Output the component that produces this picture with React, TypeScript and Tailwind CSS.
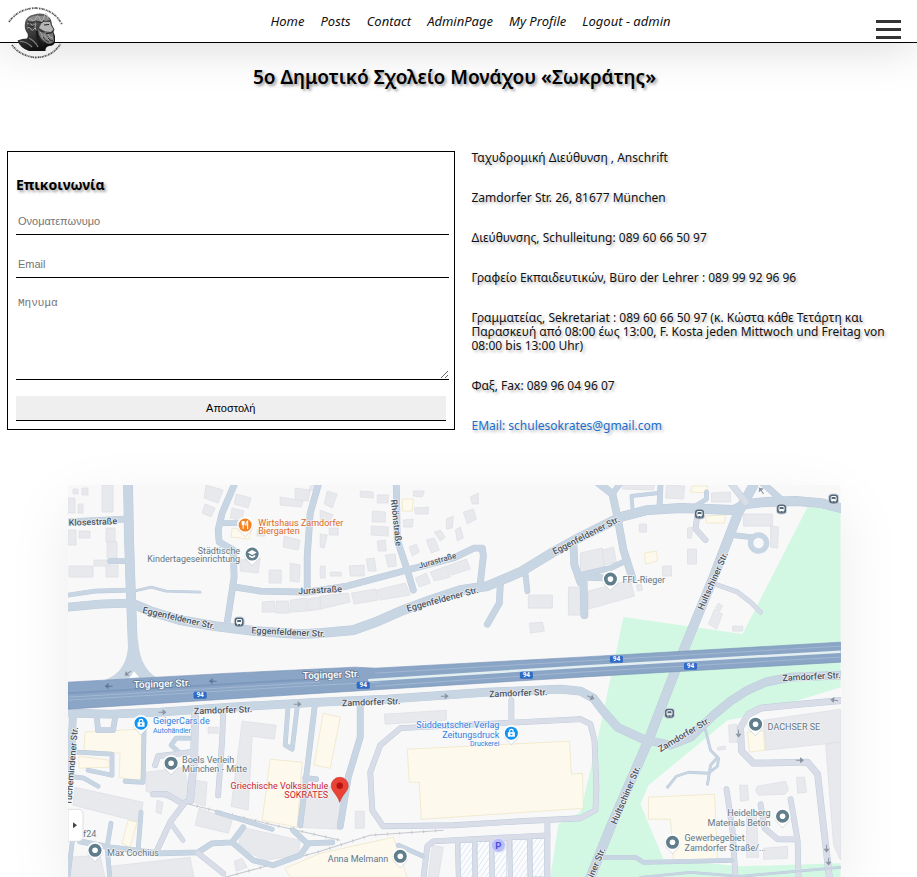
import React from 'react';

const NAV = ['Home', 'Posts', 'Contact', 'AdminPage', 'My Profile', 'Logout - admin'];

const CONTACT = [
  'Ταχυδρομική Διεύθυνση , Anschrift',
  'Zamdorfer Str. 26, 81677 München',
  'Διεύθυνσης, Schulleitung: 089 60 66 50 97',
  'Γραφείο Εκπαιδευτικών, Büro der Lehrer : 089 99 92 96 96',
  'Γραμματείας, Sekretariat : 089 60 66 50 97 (κ. Κώστα κάθε Τετάρτη και Παρασκευή από 08:00 έως 13:00, F. Kosta jeden Mittwoch und Freitag von 08:00 bis 13:00 Uhr)',
  'Φαξ, Fax: 089 96 04 96 07',
];

const BLUE = '#c8d5e3';
const GREY = '#d9dde7';

// [points, width, colour]
const ROADS: [string, number, string][] = [
  ['68,522 125,519', 6, BLUE],
  ['110,561 128,561', 5, BLUE],
  ['68,595 95,591 128,590', 4, BLUE],
  ['134,591 151,587 166,591 200,592', 2, BLUE],
  ['68,607 100,604 131,603', 8, BLUE],
  ['128,485 129,540 131,600 134,675', 9, BLUE],
  ['131,603 150,611 180,620 215,626 255,631 300,634 320,633 353,630 378,621 403,610 430,600 460,590 487,586 520,572 553,552 580,537 600,527 620,517 647,510 680,508 733,510 745,504 765,502 797,501 820,503 840,508', 9, BLUE],
  ['234,485 222,513 218,530 219,542 233,550 234,577 227,623', 6, BLUE],
  ['222,523 240,523', 5, BLUE],
  ['318,485 310,513 307,557 307,590', 6, BLUE],
  ['396,485 397,540 407,570 413,590', 6, BLUE],
  ['235,587 260,591 307,592 347,586 407,570 453,558 474,548 482,548 483,556 480,583', 6, BLUE],
  ['500,583 499,603 487,624', 6, BLUE],
  ['525,573 527,591', 5, BLUE],
  ['573,545 574,565 580,582', 7, BLUE],
  ['598,483 612,494 617,517 623,550 632,578', 7, BLUE],
  ['620,483 612,494', 5, BLUE],
  ['660,485 659,507', 5, BLUE],
  ['632,508 631,496 658,493', 3, BLUE],
  ['692,508 706,499 706,492', 4, BLUE],
  ['580,575 610,568 627,560', 5, BLUE],
  ['583,577 610,578', 6, BLUE],
  ['583,577 584,615', 7, BLUE],
  ['697,513 695,529 705,540', 5, GREY],
  ['753,485 738,512 713,577 675,670 648,740 610,827 588,882', 9, BLUE],
  ['730,483 745,502', 6, GREY],
  ['762,483 780,499', 6, BLUE],
  ['733,535 750,537', 5, BLUE],
  ['717,585 737,592 750,602 760,612', 4, GREY],
  ['68,713 110,714 160,712 230,707 320,702 387,699 487,692 560,689 580,691 593,698 602,710 617,727 643,739 670,745 690,737 713,715 730,701 747,690 765,682 790,677 840,675', 8, BLUE],
  ['73,714 70,775', 7, BLUE],
  ['97,719 98,730 113,730 115,718', 5, BLUE],
  ['144,730 143,782 125,781', 4, BLUE],
  ['77,752 112,754 112,775 88,770', 4, BLUE],
  ['68,776 84,778 98,786', 4, BLUE],
  ['195,714 194,760 190,800', 7, GREY],
  ['185,802 170,822 157,850', 5, GREY],
  ['153,794 167,794 183,804', 5, GREY],
  ['170,822 183,840', 4, GREY],
  ['190,738 176,738 171,745 178,751', 4, BLUE],
  ['190,752 175,754 158,756 155,765', 5, GREY],
  ['223,714 222,740 218,795', 5, GREY],
  ['288,705 285,745 292,749 297,707', 4, BLUE],
  ['315,702 308,760 300,825', 5, BLUE],
  ['305,778 316,779', 5, BLUE],
  ['360,705 360,737 348,777 340,826', 6, BLUE],
  ['80,841 110,847 160,853 198,852 212,843 232,842 243,827', 5, BLUE],
  ['217,812 272,829', 4, BLUE],
  ['293,830 307,843 332,842', 5, BLUE],
  ['307,845 300,855 273,865 253,860 233,843', 5, BLUE],
  ['198,853 223,873', 5, GREY],
  ['111,823 107,847 110,879', 4, BLUE],
  ['141,812 138,850', 4, BLUE],
  ['73,835 68,877', 4, BLUE],
  ['580,719 500,723 400,728 380,745 370,772 372,810 383,826 453,825 520,821 580,818 595,810 596,787 594,740 590,724 580,719', 5, GREY],
  ['511,700 511,722', 5, GREY],
  ['423,879 427,846 433,841 547,835', 5, GREY],
  ['547,822 547,879', 5, GREY],
  ['457,841 458,879', 4, GREY],
  ['474,841 475,879', 4, GREY],
  ['491,839 492,879', 4, GREY],
  ['509,838 510,879', 4, GREY],
  ['529,837 530,879', 4, GREY],
  ['398,845 423,856', 4, BLUE],
  ['844,700 800,704 760,708 748,714 740,727 741,751 753,763 807,762 817,774 821,810 829,879', 6, GREY],
  ['726,789 732,830 735,879', 5, GREY],
  ['760,804 764,828 777,839 795,839', 5, GREY],
  ['790,799 797,840 798,879', 5, GREY],
  ['602,857 635,857 643,862 732,860', 4, BLUE],
  ['640,877 690,872 740,876 840,867', 2, BLUE],
  ['705,730 710,750 718,758 717,766 708,773 688,772 676,776 667,787', 2, BLUE],
  ['707,784 710,765 717,757', 2, BLUE],
];

const BUILDINGS = [
  '102,485 113,485 113,512 102,512', '73,489 78,489 78,494 73,494', '82,488 88,488 88,495 82,495',
  '68,498 75,498 75,513 68,513', '78,504 83,504 83,513 78,513', '68,530 76,530 76,545 68,545',
  '79,531 90,531 90,538 79,538', '106,528 115,528 115,542 106,542', '107,542 117,542 117,558 107,558',
  '94,560 110,560 110,566 94,566', '69,566 93,566 93,577 69,577', '106,565 118,565 118,577 106,577',
  '206,485 223,490 218,503 204,498', '205,504 215,508 211,517 202,513', '236,494 251,498 248,508 234,504',
  '232,508 244,511 241,521 230,518', '240,560 260,558 258,573 240,571', '269,570 281,570 281,583 269,583',
  '290,563 300,565 299,582 290,581', '284,536 300,540 298,550 283,547', '295,488 310,490 308,501 295,500',
  '280,497 303,501 301,507 280,505', '257,530 265,530 265,536 257,536', '310,486 320,483 318,490 309,491',
  '327,491 337,494 332,508 324,504', '320,510 333,515 328,522 320,520', '329,528 338,528 338,535 329,535',
  '320,534 327,535 324,548 320,547', '360,491 373,492 373,498 360,497', '377,495 388,495 388,503 377,503',
  '372,511 385,512 385,522 372,522', '371,526 388,527 388,536 371,535', '377,541 385,540 386,551 378,551',
  '385,555 395,554 396,566 388,567', '320,566 325,566 325,578 320,578', '330,572 341,572 341,576 330,576',
  '349,566 364,565 364,576 350,576', '366,559 374,558 376,571 368,571', '262,602 274,601 275,612 262,612',
  '276,601 288,601 289,613 276,613', '290,600 306,598 306,611 290,612', '307,599 320,597 321,609 307,611',
  '320,596 348,593 350,602 320,609', '351,593 375,589 378,600 354,604', '376,590 405,583 410,595 380,600',
  '415,578 426,573 430,583 419,587', '430,572 446,566 450,577 434,581', '447,566 466,559 470,569 451,575',
  '413,491 424,491 422,497 413,496', '414,508 428,507 428,514 415,514', '403,520 413,519 412,527 403,527',
  '426,540 434,538 439,550 431,553', '409,547 416,544 419,552 412,556', '446,519 453,516 452,528 446,529',
  '434,532 440,530 445,537 440,541', '455,530 460,527 463,538 457,541', '463,512 473,509 476,519 467,524',
  '470,497 478,493 478,504 472,504', '622,485 654,485 653,490 622,489', '666,485 684,486 683,499 665,498',
  '711,493 730,492 730,502 711,502', '743,514 772,514 772,526 743,526', '770,526 778,527 777,548 770,547',
  '528,595 552,595 552,608 528,608', '529,623 542,622 544,631 530,633', '568,587 580,587 580,615 568,615',
  '580,553 602,548 604,566 580,573', '602,550 613,547 616,562 604,565', '588,591 630,580 634,596 588,609',
  '639,524 646,524 646,532 639,532', '662,566 671,566 671,576 662,576', '687,549 696,549 696,564 687,564',
  '687,528 692,527 691,538 687,538', '714,609 722,614 716,629 708,624', '718,603 722,606 719,611 715,608',
  '732,626 742,626 742,631 732,631', '636,585 641,584 642,590 637,591',
  '146,772 184,767 190,795 182,803 146,791', '192,779 207,782 205,806 187,800', '208,727 218,727 218,733 208,733',
  '242,721 276,725 274,739 252,736 248,810 231,806 240,737', '75,787 143,802 140,822 73,805',
  '157,800 163,802 161,814 156,812', '199,808 232,820 228,833 195,825', '242,827 300,840 298,855 265,860 238,847',
  '68,857 100,855 105,877 68,877', '110,866 190,857 194,877 110,877', '234,861 242,858 247,867 236,871',
  '307,790 341,785 338,829 300,827', '384,714 446,710 446,720 385,724', '355,811 364,811 364,828 355,828',
  '432,845 443,847 438,877 428,877', '763,720 840,709 840,742 765,750', '825,744 840,742 840,860 833,845',
  '728,725 736,724 737,742 729,742', '717,747 725,746 725,749 717,750', '739,785 747,785 748,800 740,801',
  '796,777 804,777 806,792 797,793', '746,817 756,815 758,857 746,857', '763,848 787,846 787,858 763,859',
  '757,786 785,781 788,790 784,794 758,795 755,790', '515,838 521,838 521,847 515,847',
];

const YELLOW = [
  '232,528 251,531 249,539 231,537', '402,499 413,499 412,511 402,511', '692,486 707,486 706,493 690,492',
  '705,516 725,515 724,523 706,523', '644,553 656,551 657,561 645,564',
  '85,732 142,729 141,781 119,777 120,753 84,750', '79,756 109,760 109,767 79,768', '128,820 137,822 130,847 122,843',
  '270,759 302,762 297,827 262,820', '323,713 340,717 330,768 314,765 320,730',
  '407,749 569,741 571,774 582,773 583,808 421,819 419,782 409,782',
  '285,868 320,853 393,837 407,877 290,877', '747,732 763,730 764,750 749,752',
  '648,797 714,794 717,860 673,860 670,819 648,819',
];

const PARKING = [[460, 12], [477, 12], [494, 12], [512, 15], [532, 12]];

type LabelProps = { x: number; y: number; r?: number; fill?: string; size?: number; anchor?: 'start' | 'middle' | 'end'; children: React.ReactNode };

function Label({ x, y, r = 0, fill = '#4b5460', size = 9, anchor = 'middle', children }: LabelProps) {
  return (
    <text x={x} y={y} transform={`rotate(${r} ${x} ${y})`} fill={fill} fontSize={size} textAnchor={anchor} stroke="#f7f8fa" strokeWidth={1.5} strokeOpacity={0.8} paintOrder="stroke" strokeLinejoin="round" fontWeight={fill === '#4b5460' ? 500 : 400}>
      {children}
    </text>
  );
}

function Pin({ x, y, fill = '#607d8b', kind = 'dot' }: { x: number; y: number; fill?: string; kind?: string }) {
  return (
    <g transform={`translate(${x} ${y})`}>
      <path d="M0 11 L-5 6 A8 8 0 1 1 5 6 Z" fill="#c3c9d0" transform="translate(0 1)" opacity=".6" />
      <path d="M0 11 L-5 6 A8 8 0 1 1 5 6 Z" fill="#fff" />
      <circle r="6.5" fill={fill} />
      {kind === 'dot' && <circle r="2.8" fill="#fff" />}
      {kind === 'food' && <path d="M-3 -4v3q0 1 1 1v4M-1 -4v3q0 1-1 1M-2 -4v4M2.5 4v-8q-2 1-2 4h2" fill="none" stroke="#fff" strokeWidth="1" />}
      {kind === 'school' && <path d="M-4.5 -1.5 0 -4 4.5 -1.5 0 1ZM-3 .8 0 2.4 3 .8V2.6L0 4.2-3 2.6Z" fill="#fff" />}
      {kind === 'shop' && (
        <>
          <path d="M-3.5 -1h7v4.500h-7Z" fill="#fff" />
          <path d="M-1.800 -1v-1a1.800 1.800 0 0 1 3.600 0v1" fill="none" stroke="#fff" strokeWidth="1.200" />
          <path d="M-1 .5h2v1.500h-2Z" fill={fill} />
        </>
      )}
    </g>
  );
}

function Bus({ x, y }: { x: number; y: number }) {
  return (
    <g transform={`translate(${x} ${y})`}>
      <rect x="-5" y="-5" width="10" height="10" rx="3.5" fill="#52677a" stroke="#cfd6dd" strokeWidth="1" />
      <rect x="-2.500" y="-2.500" width="5" height="4" rx="1" fill="none" stroke="#fff" strokeWidth="1" />
      <path d="M-2 .5h4M-2 2.700h1M1 2.700h1" stroke="#fff" strokeWidth="1" />
    </g>
  );
}

function Shield({ x, y }: { x: number; y: number }) {
  return (
    <g>
      <rect x={x - 6.5} y={y - 3.5} width="13" height="7" rx="1.5" fill="#2f6ac6" />
      <text x={x} y={y + 2.3} fontSize="6.5" fontWeight="700" fill="#fff" textAnchor="middle">94</text>
    </g>
  );
}

function Arrow({ x, y, r = 0, fill = '#8a94a2' }: { x: number; y: number; r?: number; fill?: string }) {
  return <path d="M-3.500 0h5M1 -2 3.500 0 1 2Z" fill={fill} stroke={fill} strokeWidth="1" transform={`translate(${x} ${y}) rotate(${r})`} />;
}

function StreetMap() {
  return (
    <svg viewBox="68 485 772 392" className="block w-full font-['Roboto','Noto_Sans',sans-serif]" role="img" aria-label="Zamdorfer Str. 26, München">
      <defs>
        <pattern id="hatch" width="4" height="4" patternUnits="userSpaceOnUse" patternTransform="rotate(35)">
          <rect width="4" height="4" fill="#fbfcfe" />
          <path d="M0 0v4" stroke="#dde5f3" strokeWidth="1.500" />
        </pattern>
      </defs>
      <rect x="68" y="485" width="772" height="392" fill="#f8f8f9" />
      <path d="M807 507 840 510V687L743 717 727 720 648 785 640 804 663 859 740 866 840 863V877H550L558 824 580 812 597 740 623 617 742 634Z" fill="#d2f8e3" />
      <g fill="#e8e9ed" stroke="#dcdee4" strokeWidth=".7">{BUILDINGS.map((p) => <polygon key={p} points={p} />)}</g>
      <g fill="#fdfaed" stroke="#efe6c6" strokeWidth=".8">{YELLOW.map((p) => <polygon key={p} points={p} />)}</g>
      <g stroke="#c9d2e0" strokeWidth=".6" fill="url(#hatch)">
        {PARKING.map(([x, w]) => <rect key={x} x={x} y={842 - (x - 460) / 18} width={w} height="38" />)}
      </g>
      <path d="M185 803 270 824 340 840M225 877 320 851 370 835 443 830" fill="none" stroke="#c5c8cd" strokeWidth="1" />
      <path d="M185 803 270 824 340 840M225 877 320 851 370 835 443 830" fill="none" stroke="#c5c8cd" strokeWidth="3" strokeDasharray="1 11" />
      <g fill="none" strokeLinecap="round" strokeLinejoin="round">
        {ROADS.map(([p, w], i) => <polyline key={i} points={p} stroke="#bccadb" strokeWidth={w + 0.8} />)}
        {ROADS.map(([p, w, c], i) => <polyline key={i} points={p} stroke={c} strokeWidth={w} />)}
      </g>
      <circle cx="758" cy="543" r="8" fill="#f7f8f9" stroke={BLUE} strokeWidth="5.5" />
      <path d="M128 640Q129 672 104 680H162Q140 672 138 640Z" fill={BLUE} />
      <path d="M134 671 129 678 139 677Z" fill="#fff" />
      <path d="M68 682 230 673 355 667 375 668 580 657 840 642V662L580 677 320 693 68 709Z" fill="#8ba5c6" stroke="#7591b6" strokeWidth=".6" />
      <path d="M368 680 580 666.500 840 651.500" stroke="#e3eff0" strokeWidth="2.500" fill="none" />
      <path d="M68 700 320 685 380 682M68 697 320 682M375 673 580 661 840 646M375 686 580 672 840 657" stroke="#a7bcd6" strokeWidth=".8" fill="none" />
      <path d="M68 693 330 678" stroke="#7d98bd" strokeWidth="2" fill="none" />
      {[[363, 685], [616, 659], [526, 675], [690, 666], [200, 695]].map(([x, y]) => <Shield key={x} x={x} y={y} />)}
      <g fontSize="10" fontWeight="500" fill="#fff" textAnchor="middle" stroke="#5f7897" strokeWidth="1.500" paintOrder="stroke">
        <text x="162" y="687" transform="rotate(-2 162 687)">Töginger Str.</text>
        <text x="331" y="678" transform="rotate(-2 331 678)">Töginger Str.</text>
      </g>
      <Arrow x={213} y={681} r={180} fill="#5d7799" /><Arrow x={109} y={686} r={180} fill="#5d7799" />
      <Arrow x={128} y={673} r={145} /><Arrow x={162} y={712} /><Arrow x={297} y={704} /><Arrow x={444} y={696} />
      <Arrow x={590} y={697} r={25} /><Arrow x={738} y={733} r={90} /><Arrow x={799} y={760} /><Arrow x={834} y={700} r={190} />
      <Arrow x={826} y={848} r={90} /><Arrow x={828} y={861} r={90} /><Arrow x={761} y={491} r={235} />

      <Label x={93} y={525} r={-2}>Klosestraße</Label>
      <Label x={178} y={621} r={13}>Eggenfeldener Str.</Label>
      <Label x={288} y={635} r={3}>Eggenfeldener Str.</Label>
      <Label x={320} y={593} r={-3}>Jurastraße</Label>
      <Label x={438} y={563} r={-16} size={8}>Jurastraße</Label>
      <Label x={393} y={523} r={84}>Rhönstraße</Label>
      <Label x={443} y={602} r={-15}>Eggenfeldener Str.</Label>
      <Label x={587} y={538} r={-27}>Eggenfeldener Str.</Label>
      <Label x={715} y={582} r={-66}>Hultschiner Str.</Label>
      <Label x={628} y={796} r={-67}>Hultschiner Str.</Label>
      <Label x={605} y={849} r={-67} anchor="end">Hultschiner Str.</Label>
      <Label x={223} y={713} r={-2}>Zamdorfer Str.</Label>
      <Label x={371} y={705} r={-2}>Zamdorfer Str.</Label>
      <Label x={518} y={696} r={-2}>Zamdorfer Str.</Label>
      <Label x={685} y={737} r={-31}>Zamdorfer Str.</Label>
      <Label x={782} y={681} r={-3} anchor="start">Zamdorfer Str.</Label>
      <Label x={78} y={727} r={-85} anchor="end">Tuchemindener Str.</Label>

      <Bus x={239} y={622} /><Bus x={699} y={514} /><Bus x={781} y={509} /><Bus x={833} y={499} /><Bus x={669} y={713} />

      <Pin x={245} y={525} fill="#f58220" kind="food" />
      <Label x={258} y={526} anchor="start" fill="#e0691f">Wirtshaus Zamdorfer</Label>
      <Label x={258} y={534} anchor="start" fill="#e0691f">Biergarten</Label>
      <Pin x={252} y={554} kind="school" />
      <Label x={240} y={554} anchor="end" fill="#66777f">Städtische</Label>
      <Label x={240} y={562} anchor="end" fill="#66777f">Kindertageseinrichtung</Label>
      <Pin x={610} y={579} />
      <Label x={622} y={583} anchor="start" fill="#66777f">FFL-Rieger</Label>
      <Pin x={141} y={723} fill="#1194f0" kind="shop" />
      <Label x={153} y={724} anchor="start" fill="#3481e0">GeigerCars.de</Label>
      <Label x={153} y={733} anchor="start" fill="#3481e0" size={7}>Autohändler</Label>
      <Pin x={171} y={763} />
      <Label x={182} y={763} anchor="start" fill="#66777f">Boels Verleih</Label>
      <Label x={182} y={772} anchor="start" fill="#66777f">München - Mitte</Label>
      <Pin x={511} y={733} fill="#1194f0" kind="shop" />
      <Label x={499} y={728} anchor="end" fill="#3481e0">Süddeutscher Verlag</Label>
      <Label x={499} y={738} anchor="end" fill="#3481e0">Zeitungsdruck</Label>
      <Label x={499} y={746} anchor="end" fill="#3481e0" size={7}>Druckerei</Label>
      <Pin x={755} y={724} />
      <Label x={767} y={730} anchor="start" fill="#66777f">DACHSER SE</Label>
      <Pin x={782} y={816} />
      <Label x={770} y={816} anchor="end" fill="#66777f">Heidelberg</Label>
      <Label x={770} y={826} anchor="end" fill="#66777f">Materials Beton</Label>
      <Pin x={672} y={842} />
      <Label x={684} y={841} anchor="start" fill="#66777f">Gewerbegebiet</Label>
      <Label x={684} y={851} anchor="start" fill="#66777f">Zamdorfer Straße/...</Label>
      <Pin x={95} y={850} />
      <Label x={107} y={856} anchor="start" fill="#66777f">Max Cochius</Label>
      <Label x={83} y={837} anchor="start" fill="#66777f">f24</Label>
      <Pin x={400} y={856} />
      <Label x={388} y={862} anchor="end" fill="#66777f">Anna Melmann</Label>
      <Label x={328} y={789} anchor="end" fill="#d01f2b">Griechische Volksschule</Label>
      <Label x={328} y={798} anchor="end" fill="#d01f2b">SOKRATES</Label>
      <path d="M339.500 802C337 794 331 791 331 785.500A8.500 8.500 0 0 1 348 785.500C348 791 342 794 339.500 802Z" fill="#ea4335" stroke="#c5352b" strokeWidth=".6" />
      <circle cx="339.500" cy="785.500" r="3.200" fill="#b31412" />
      <circle cx="498" cy="845" r="7" fill="#b9bdf8" stroke="#dfe1fc" strokeWidth="1" />
      <text x="498" y="848.500" fontSize="9.500" fontWeight="700" fill="#4a4fdc" textAnchor="middle">P</text>
      <path d="M68 809H78Q83 809 83 814V836Q83 841 78 841H68Z" fill="#fff" stroke="#d5d8dc" strokeWidth=".8" />
      <path d="M73 822 77 825 73 828Z" fill="#444" />
    </svg>
  );
}

function Logo() {
  return (
    <svg viewBox="0 0 56 56" className="size-14" role="img" aria-label="Σωκράτης">
      <defs>
        <path id="upper" d="M1 16Q10 3 27 2Q46 3 54 18.500" />
        <path id="lower" d="M4 39Q12 50 28 51.500Q44 51 52.500 38" />
        <linearGradient id="bust" x1="0" x2=".3" y1="0" y2="1"><stop offset="0" stopColor="#6a6a6a" /><stop offset=".6" stopColor="#3a3a3a" /><stop offset="1" stopColor="#111" /></linearGradient>
      </defs>
      <g fill="none" stroke="#555" strokeWidth="1.800">
        <use href="#upper" strokeDasharray="1.300 .5 .8 .6 1.600 .4 .7 1" />
        <use href="#lower" strokeDasharray="1.300 .4 .7 .6 1.500 .5 .9 .8" />
      </g>
      <path d="M9.500 34.500Q14 32.500 19 32.500Q21 29 18.500 26Q16 22 17 17Q18 10 26 8.500Q34 6 39.500 10Q43 12 43.500 16L44 19 46.500 23.500 45.500 26 47 30 47 36Q46 40 41 40Q37 41 37.500 45H21Q12 42 9.500 34.500Z" fill="url(#bust)" />
      <path d="M19 14Q24 8.500 32 10Q40 9 42 14L35 15.500Q29 15 26 16Z" fill="#8a8a8a" />
      <path d="M34 16 42 16 43 19.500 45.500 23.500 43 26 37 25.500 31 22Z" fill="#b5b5b5" />
      <path d="M30 23Q34 28 37 26L45 27 46 35Q44 39 38 37Q31 35 30 23Z" fill="#777" />
      <path d="M20 14q2-3 4 0t4-2 4 1 4-2 4 1M19 18q3-3 4 0t5-1M19 22q3-2 4 1t4-1M28 18q-2 3 0 6M32 26q2 1 2 4t4 4M36 28q1 4 5 6M40 28q1 4 5 4" fill="none" stroke="#bbb" strokeWidth=".8" />
      <path d="M20 16q3 2 5 0t6 0 5-2M20 20q3 2 6 0M30 29q3 5 8 8M35 31q2 4 6 5M40 32q2 3 5 3" fill="none" stroke="#1c1c1c" strokeWidth=".8" />
      <path d="M36 19 41 18.500M43.500 27 38 27.500" stroke="#222" strokeWidth="1.200" />
      <path d="M29 25Q28 34 36 40" stroke="#1a1a1a" strokeWidth="2" fill="none" />
      <path d="M12 35.500Q19 35.500 24 41M21 32Q27 35 30 41" stroke="#858585" strokeWidth="1.200" fill="none" />
    </svg>
  );
}

export default function App() {
  const field = 'block w-full border-0 border-b border-black bg-white px-[2px] text-[11px] text-black placeholder:text-[#757575] focus:outline-none';
  return (
    <div className="min-h-screen overflow-hidden bg-white font-['Noto_Sans','Open_Sans',sans-serif] text-black">
      <header className="relative flex h-[43px] items-center justify-center border-b border-black bg-white pl-6 pt-px shadow-[0_0_50px_rgba(0,0,0,0.18)]">
        <a href="#home" className="absolute left-2 top-1.5 z-10"><Logo /></a>
        <nav className="flex gap-4 text-[13px] italic leading-[21px] text-[#111]">
          {NAV.map((item) => <a key={item} href="#menu">{item}</a>)}
        </nav>
        <button type="button" aria-label="Menu" className="absolute right-4 top-5 flex w-[25px] flex-col gap-[5px]">
          <span className="h-[3px] bg-[#333]" />
          <span className="h-[3px] bg-[#333]" />
          <span className="h-[3px] bg-[#333]" />
        </button>
      </header>

      <main className="relative mr-2">
        <h1 className="pt-[22px] text-center text-[19px] font-semibold leading-6 [text-shadow:2px_2px_3px_rgba(0,0,0,0.4)]">5ο Δημοτικό Σχολείο Μονάχου «Σωκράτης»</h1>

        <section className="mt-[62px] grid grid-cols-2 items-start">
          <form className="ml-[7px] border border-black pb-2 pl-2 pr-[5px] pt-6" onSubmit={(e) => e.preventDefault()}>
            <h2 className="text-[14px] font-bold leading-[18px] [text-shadow:2px_2px_3px_rgba(0,0,0,0.4)]">Επικοινωνία</h2>
            <input aria-label="Ονοματεπωνυμο" type="text" placeholder="Ονοματεπωνυμο" className={`${field} mt-[14px] h-[27px] font-['Liberation_Sans',sans-serif]`} />
            <input aria-label="Email" type="email" placeholder="Email" className={`${field} mt-4 h-[27px] font-['Liberation_Sans',sans-serif]`} />
            <textarea aria-label="Μηνυμα" placeholder="Μηνυμα" className={`${field} mt-4 h-[86px] resize py-[2px] font-['Liberation_Mono',monospace] leading-[14px]`} />
            <div className="mt-4 pr-[3px]">
              <button type="submit" className="block h-[25px] w-full border-b border-black bg-[#efefef] font-['Liberation_Sans',sans-serif] text-[11px]">Αποστολή</button>
            </div>
          </form>

          <address className="flex flex-col gap-[26px] pl-[17px] pr-1 text-[12px] not-italic leading-[14px] text-[#111] [text-shadow:2px_2px_3px_rgba(0,0,0,0.3)]">
            {CONTACT.map((line) => <p key={line}>{line}</p>)}
            <a href="mailto:schulesokrates@gmail.com" className="self-start text-[#1a6fd0]">EMail: schulesokrates@gmail.com</a>
          </address>
        </section>

        <div className="mx-auto mt-[52px] w-[85%] shadow-[0_20px_60px_rgba(0,0,0,0.08)]">
          <StreetMap />
        </div>
      </main>
    </div>
  );
}
